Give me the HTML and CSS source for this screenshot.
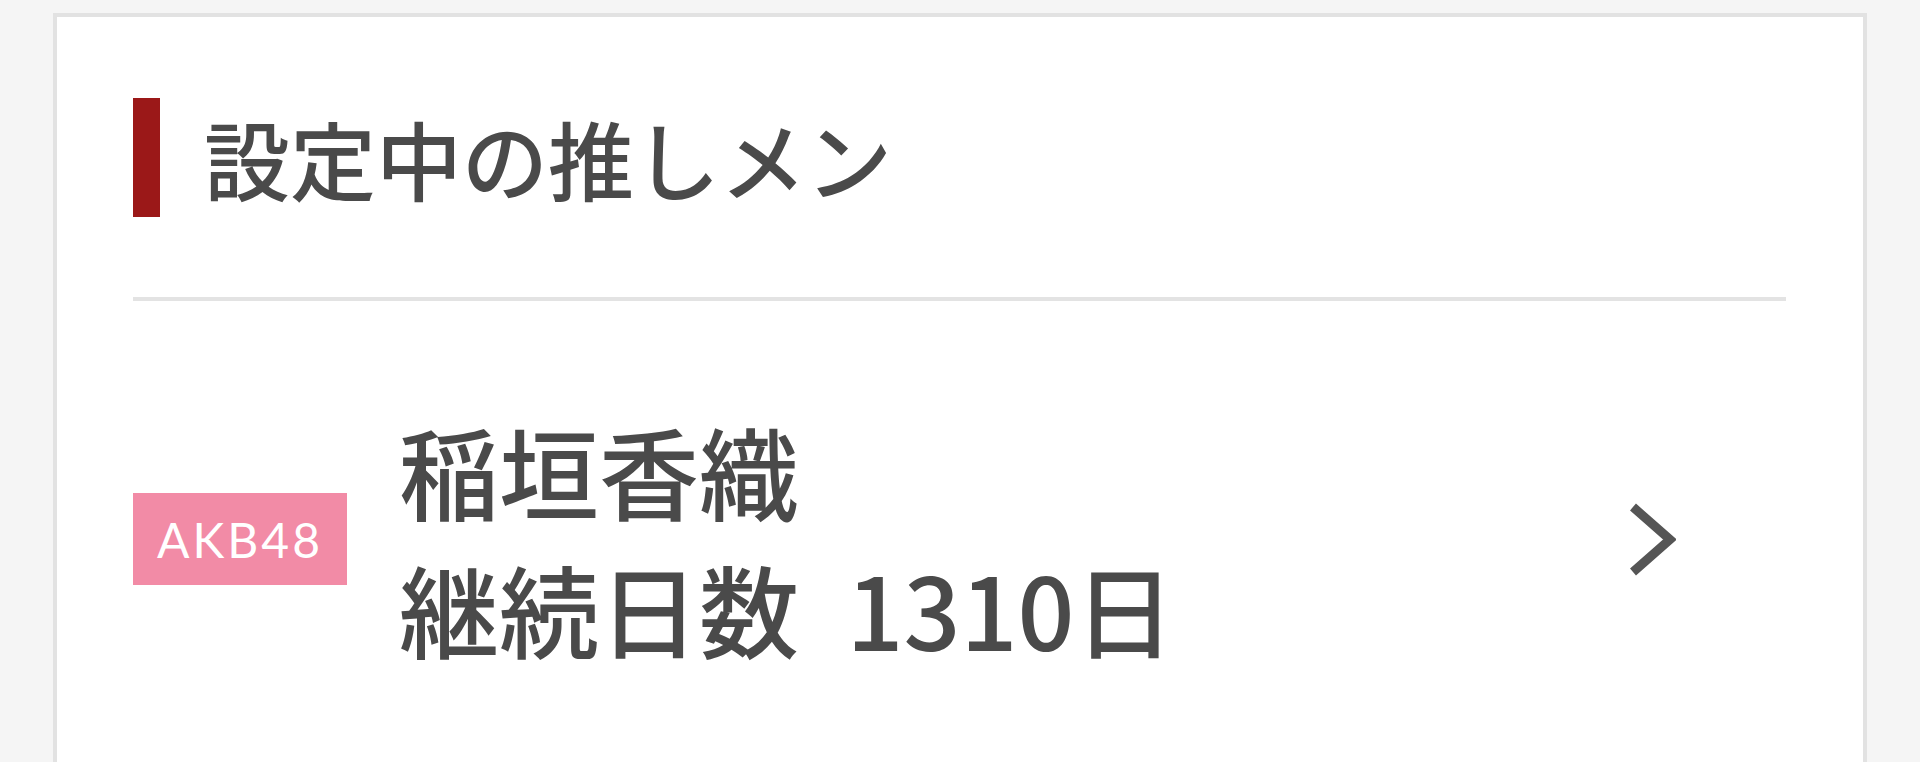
FILE: index.html
```html
<!DOCTYPE html>
<html lang="ja">
<head>
<meta charset="utf-8">
<title>設定中の推しメン</title>
<link rel="stylesheet" href="styles.css">
</head>
<body>
<div class="page">
  <section class="card">
    <header class="card-head">
      <span class="head-bar"></span>
      <h2 class="head-title">設定中の推しメン</h2>
    </header>
    <a class="member-row" href="#">
      <span class="group-badge">AKB48</span>
      <div class="member-info">
        <div class="member-name">稲垣香織</div>
        <div class="member-days">継続日数 <span class="days-count">1310日</span></div>
      </div>
      <svg class="chevron" width="48" height="77" viewBox="0 0 48 77" aria-hidden="true">
        <polyline points="5,6 42,38.5 5,71" fill="none" stroke="#555" stroke-width="9" stroke-linecap="butt" stroke-linejoin="miter"/>
      </svg>
    </a>
  </section>
</div>
</body>
</html>
```
FILE: styles.css
```css
html, body {
  margin: 0;
  padding: 0;
  height: 100%;
  overflow: hidden;
  background: #f5f5f5;
}

.page {
  padding: 13px 0 0 53px;
  font-family: "Noto Sans CJK JP", "Noto Sans", sans-serif;
  color: #4a4a4a;
}

.card {
  width: 1653px;
  height: 745px;
  background: #fff;
  border: 4px solid #e2e2e2;
  border-bottom: none;
  padding: 0 77px 0 76px;
  box-sizing: content-box;
  margin: 0;
  overflow: hidden;
}

.card-head {
  display: flex;
  align-items: center;
  padding: 81px 0 80px;
  border-bottom: 4px solid #e3e3e3;
}

.head-bar {
  width: 27px;
  height: 119px;
  background: #9b1818;
  flex: none;
}

.head-title {
  margin: 0 0 0 44px;
  font-size: 86px;
  font-weight: 500;
  line-height: 1;
  color: #4a4a4a;
}

.member-row {
  display: flex;
  align-items: center;
  padding: 100px 0 40px;
  text-decoration: none;
  color: inherit;
}

.group-badge {
  flex: none;
  width: 214px;
  height: 92px;
  background: #f28ba6;
  color: #fff;
  font-family: "Lato", "Noto Sans", sans-serif;
  font-size: 48px;
  letter-spacing: 3px;
  display: flex;
  align-items: center;
  justify-content: center;
}

.member-info {
  margin-left: 52px;
  font-size: 100px;
  font-weight: 500;
  line-height: 138px;
}

.days-count {
  margin-left: 25px;
}

.chevron {
  flex: none;
  margin-left: auto;
  margin-right: 110px;
}
```
